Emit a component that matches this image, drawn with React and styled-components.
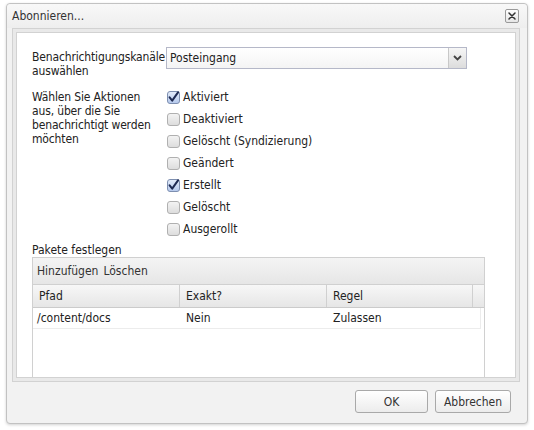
import React from 'react';
import styled, { createGlobalStyle } from 'styled-components';

const Global = createGlobalStyle`
  html, body { margin: 0; padding: 0; background: #fff; }
  body {
    font-family: "DejaVu Sans Condensed", "DejaVu Sans", sans-serif;
    font-size: 12px;
    color: #222;
  }
`;

const Page = styled.div`
  width: 534px;
  height: 430px;
  box-sizing: border-box;
  padding: 3px 0 0 6px;
`;

const Window = styled.div`
  width: 522px;
  height: 421px;
  box-sizing: border-box;
  border: 1px solid #c2c2c2;
  border-radius: 4px;
  background: #f2f2f2;
  box-shadow: 0 1px 3px rgba(0, 0, 0, 0.18);
  display: flex;
  flex-direction: column;
`;

const TitleBar = styled.div`
  height: 24px;
  flex: none;
  display: flex;
  align-items: center;
  justify-content: space-between;
  padding: 0 8px 0 5px;
  background: linear-gradient(#f8f8f8, #eeeeee);
  border-radius: 4px 4px 0 0;
`;

const Title = styled.span`
  color: #333;
  font-size: 12px;
`;

const CloseButton = styled.div`
  width: 14px;
  height: 14px;
  box-sizing: border-box;
  border: 1px solid #9a9a9a;
  border-radius: 2px;
  background: linear-gradient(#ffffff, #e6e6e6);
  display: flex;
  align-items: center;
  justify-content: center;
`;

const Frame = styled.div`
  margin-left: 5px;
  width: 508px;
  height: 354px;
  box-sizing: border-box;
  border: 1px solid #d2d2d2;
  background: #e9e9e9;
  padding: 3px;
  display: flex;
`;

const Panel = styled.div`
  flex: 1;
  border: 1px solid #d2d2d2;
  background: #fff;
  overflow: hidden;
  padding: 14px 0 0 15px;
`;

const FieldRow = styled.div`
  display: grid;
  grid-template-columns: 134px auto;
  align-items: start;
  margin-top: ${p => p.$gap || 0}px;
`;

const Label = styled.div`
  line-height: 14px;
  letter-spacing: -0.15px;
  margin-top: ${p => p.$offset || 0}px;
  color: #222;
  white-space: nowrap;
`;

const Select = styled.div`
  width: 301px;
  height: 22px;
  box-sizing: border-box;
  border: 1px solid #b5b8c8;
  background: linear-gradient(#ffffff, #f4f4f4);
  display: flex;
  align-items: stretch;
`;

const SelectValue = styled.div`
  flex: 1;
  display: flex;
  align-items: center;
  padding-left: 3px;
`;

const SelectTrigger = styled.div`
  width: 17px;
  border-left: 1px solid #c8c8c8;
  background: linear-gradient(#f6f6f6, #dcdcdc);
  display: flex;
  align-items: center;
  justify-content: center;
`;

const CheckList = styled.div`
  display: flex;
  flex-direction: column;
`;

const CheckItem = styled.label`
  height: 22px;
  display: flex;
  align-items: center;
  gap: 3px;
  padding-left: 1px;
`;

const SectionTitle = styled.div`
  margin-top: 4px;
  line-height: 13px;
  color: #222;
`;

const Grid = styled.div`
  width: 453px;
  height: 140px;
  box-sizing: border-box;
  border: 1px solid #d0d0d0;
  display: flex;
  flex-direction: column;
`;

const Toolbar = styled.div`
  height: 27px;
  flex: none;
  box-sizing: border-box;
  border-bottom: 1px solid #d0d0d0;
  background: linear-gradient(#f4f4f4, #e6e6e6);
  display: flex;
  align-items: center;
  gap: 5px;
  padding-left: 4px;
  color: #333;
`;

const HeaderRow = styled.div`
  height: 23px;
  flex: none;
  box-sizing: border-box;
  border-bottom: 1px solid #cbcbcb;
  background: linear-gradient(#f7f7f7, #e6e6e6);
  display: flex;
`;

const HeaderCell = styled.div`
  width: ${p => p.$w}px;
  flex: none;
  box-sizing: border-box;
  border-right: 1px solid #d0d0d0;
  display: flex;
  align-items: center;
  padding-left: ${p => p.$pad}px;
`;

const Body = styled.div`
  flex: 1;
  padding-right: 3px;
`;

const DataRow = styled.div`
  height: 21px;
  box-sizing: border-box;
  border-bottom: 1px solid #ececec;
  border-right: 1px solid #ececec;
  display: flex;
`;

const DataCell = styled.div`
  width: ${p => p.$w}px;
  flex: none;
  box-sizing: border-box;
  display: flex;
  align-items: center;
  padding-left: ${p => p.$pad}px;
`;

const Footer = styled.div`
  display: flex;
  justify-content: flex-end;
  gap: 7px;
  padding: 8px 16px 0 0;
`;

const Button = styled.button`
  width: ${p => p.$w}px;
  height: 23px;
  box-sizing: border-box;
  border: 1px solid #a9a9a9;
  border-radius: 3px;
  background: linear-gradient(#ffffff, #ececec);
  font-family: inherit;
  font-size: 12px;
  color: #333;
  padding: 0;
`;

const CheckBox = ({ checked }) => (
  <svg width="13" height="13" viewBox="0 0 13 13">
    <defs>
      <linearGradient id="cbOff" x1="0" y1="0" x2="0" y2="1">
        <stop offset="0" stopColor="#f4f4f4" />
        <stop offset="1" stopColor="#dcdcdc" />
      </linearGradient>
      <linearGradient id="cbOn" x1="0" y1="0" x2="0" y2="1">
        <stop offset="0" stopColor="#e4ecfa" />
        <stop offset="1" stopColor="#b4c8ec" />
      </linearGradient>
    </defs>
    <rect x="0.5" y="0.5" width="12" height="12" rx="2.5"
      fill={checked ? 'url(#cbOn)' : 'url(#cbOff)'}
      stroke={checked ? '#7e8fb0' : '#b0b0b0'} />
    {checked && (
      <path d="M2.6 6.4 L5.2 9.6 L11.2 1.2" fill="none" stroke="#1e2a52"
        strokeWidth="2" strokeLinecap="round" strokeLinejoin="round" />
    )}
  </svg>
);

const actions = [
  ['Aktiviert', true],
  ['Deaktiviert', false],
  ['Gelöscht (Syndizierung)', false],
  ['Geändert', false],
  ['Erstellt', true],
  ['Gelöscht', false],
  ['Ausgerollt', false],
];

export default function App() {
  return (
    <>
      <Global />
      <Page>
        <Window>
          <TitleBar>
            <Title>Abonnieren...</Title>
            <CloseButton>
              <svg width="8" height="8" viewBox="0 0 8 8">
                <path d="M1 1 L7 7 M7 1 L1 7" stroke="#333" strokeWidth="1.5" strokeLinecap="round" />
              </svg>
            </CloseButton>
          </TitleBar>
          <Frame>
            <Panel>
              <FieldRow>
                <Label $offset={3}>Benachrichtigungskanäle<br />auswählen</Label>
                <Select>
                  <SelectValue>Posteingang</SelectValue>
                  <SelectTrigger>
                    <svg width="9" height="6" viewBox="0 0 9 6">
                      <path d="M1 1 L4.5 4.5 L8 1" fill="none" stroke="#444" strokeWidth="1.8" />
                    </svg>
                  </SelectTrigger>
                </Select>
              </FieldRow>
              <FieldRow $gap={8}>
                <Label $offset={4}>Wählen Sie Aktionen<br />aus, über die Sie<br />benachrichtigt werden<br />möchten</Label>
                <CheckList>
                  {actions.map(([name, on]) => (
                    <CheckItem key={name}>
                      <CheckBox checked={on} />
                      <span>{name}</span>
                    </CheckItem>
                  ))}
                </CheckList>
              </FieldRow>
              <SectionTitle>Pakete festlegen</SectionTitle>
              <Grid>
                <Toolbar>
                  <span>Hinzufügen</span>
                  <span>Löschen</span>
                </Toolbar>
                <HeaderRow>
                  <HeaderCell $w={147} $pad={6}>Pfad</HeaderCell>
                  <HeaderCell $w={147} $pad={6}>Exakt?</HeaderCell>
                  <HeaderCell $w={146} $pad={6}>Regel</HeaderCell>
                </HeaderRow>
                <Body>
                  <DataRow>
                    <DataCell $w={147} $pad={4}>/content/docs</DataCell>
                    <DataCell $w={147} $pad={6}>Nein</DataCell>
                    <DataCell $w={146} $pad={6}>Zulassen</DataCell>
                  </DataRow>
                </Body>
              </Grid>
            </Panel>
          </Frame>
          <Footer>
            <Button $w={73}>OK</Button>
            <Button $w={76}>Abbrechen</Button>
          </Footer>
        </Window>
      </Page>
    </>
  );
}
